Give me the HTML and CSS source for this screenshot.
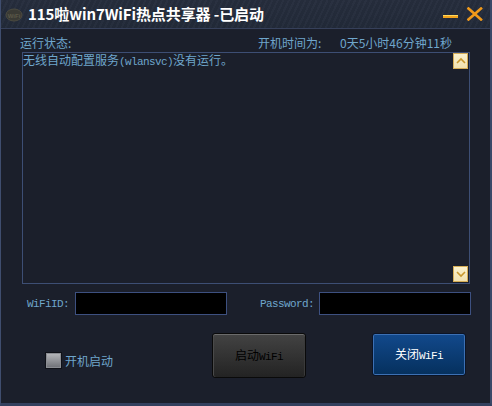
FILE: index.html
```html
<!DOCTYPE html>
<html lang="zh-CN">
<head>
<meta charset="utf-8">
<title>115啦win7WiFi热点共享器</title>
<link rel="stylesheet" href="styles.css">
</head>
<body>
<div class="window">
  <div class="titlebar">
    <svg class="logo" width="18" height="14" viewBox="0 0 18 14">
      <ellipse cx="9" cy="7" rx="8" ry="6" fill="#3a3a34" stroke="#4b4a40" stroke-width="1"/>
      <text x="9" y="9.5" font-size="6" font-family="Liberation Sans, sans-serif" font-weight="bold" text-anchor="middle" fill="#5a5848">WiFi</text>
    </svg>
    <div class="title">115啦win7WiFi热点共享器 -已启动</div>
    <div class="controls">
      <svg class="min" width="16" height="14" viewBox="0 0 16 14"><rect x="0" y="8" width="15" height="3" fill="#f0a21c"/><rect x="0" y="8" width="15" height="1" fill="#ffd75a"/></svg>
      <svg class="close" width="16" height="14" viewBox="0 0 16 14"><path d="M1.5 1.5 L14 12.5 M14 1.5 L1.5 12.5" stroke="#f0991a" stroke-width="2.6" stroke-linecap="square"/></svg>
    </div>
  </div>
  <div class="content">
    <div class="status-row">
      <span class="st-label">运行状态:</span>
      <span class="up-label">开机时间为:</span>
      <span class="up-time">0天5小时46分钟11秒</span>
    </div>
    <div class="log">
      <div class="log-text">无线自动配置服务<span class="m">(wlansvc)</span>没有运行。</div>
      <div class="scroll">
        <div class="sbtn"><svg width="12" height="8" viewBox="0 0 12 8"><path d="M2 6 L6 2 L10 6" fill="none" stroke="#c9982e" stroke-width="1.6"/></svg></div>
        <div class="sbtn"><svg width="12" height="8" viewBox="0 0 12 8"><path d="M2 2 L6 6 L10 2" fill="none" stroke="#c9982e" stroke-width="1.6"/></svg></div>
      </div>
    </div>
    <div class="input-row">
      <label class="lbl lbl-id m">WiFiID:</label>
      <div class="field"></div>
      <label class="lbl lbl-pw m">Password:</label>
      <div class="field"></div>
    </div>
    <div class="bottom-row">
      <div class="check">
        <span class="box"></span>
        <span class="check-text">开机启动</span>
      </div>
      <button class="btn btn-start"><span class="btn-label">启动<span class="m">WiFi</span></span></button>
      <button class="btn btn-stop"><span class="btn-label">关闭<span class="m">WiFi</span></span></button>
    </div>
  </div>
</div>
</body>
</html>
```

FILE: styles.css
```css
* { box-sizing: border-box; }
html, body {
  margin: 0;
  padding: 0;
  background: #1b1f2b;
}
body {
  width: 492px;
  height: 406px;
  overflow: hidden;
  font-family: "Noto Sans CJK SC", "Noto Sans", sans-serif;
  font-size: 12px;
  color: #6fa6cc;
}
.window {
  width: 492px;
  height: 406px;
  display: flex;
  flex-direction: column;
  background: #1b1f2b;
  border-left: 1px solid #3f4d6e;
  border-right: 2px solid #3a4868;
  border-bottom: 3px solid #33405e;
}
.titlebar {
  height: 29px;
  flex: none;
  display: flex;
  align-items: center;
  background:
    repeating-linear-gradient(115deg, rgba(255,255,255,0.018) 0 2px, rgba(0,0,0,0.03) 2px 5px),
    linear-gradient(#262d3d, #222a39);
  border-bottom: 1px solid #36405a;
}
.logo {
  margin-left: 4px;
  margin-top: 1px;
  flex: none;
}
.title {
  margin-left: 5px;
  color: #ffffff;
  font-weight: bold;
  font-size: 15px;
  line-height: 18px;
  white-space: nowrap;
  letter-spacing: -0.1px;
}
.controls {
  margin-left: auto;
  margin-right: 7px;
  display: flex;
  gap: 8px;
  align-items: center;
}
.content {
  flex: 1;
  padding-left: 19px;
  display: flex;
  flex-direction: column;
}
.status-row {
  margin-top: 5px;
  height: 17px;
  display: flex;
  align-items: center;
  line-height: 17px;
  white-space: nowrap;
}
.st-label { width: 238px; }
.up-label { width: 82px; }
.log {
  margin-left: 2px;
  margin-top: 1px;
  width: 448px;
  height: 232px;
  border: 1px solid #3d4e74;
  display: flex;
}
.log-text {
  flex: 1;
  line-height: 14px;
  white-space: nowrap;
}
.scroll {
  width: 16px;
  display: flex;
  flex-direction: column;
  justify-content: space-between;
  padding-bottom: 1px;
}
.sbtn {
  width: 15px;
  height: 16px;
  background: linear-gradient(#fbf1cc, #f2e2b0);
  border: 1px solid #d6ad56;
  display: flex;
  align-items: center;
  justify-content: center;
}
.m {
  font-family: "Liberation Mono", "DejaVu Sans Mono", monospace;
  font-size: 11px;
  letter-spacing: -0.6px;
}
.input-row {
  margin-top: 8px;
  height: 23px;
  display: flex;
  align-items: center;
}
.lbl {
  color: #6fa6cc;
  white-space: nowrap;
}
.lbl-id {
  width: 55px;
  padding-left: 7px;
}
.lbl-pw {
  width: 92px;
  text-align: right;
  padding-right: 5px;
}
.field {
  width: 152px;
  height: 23px;
  background: #000;
  border: 1px solid #3d5080;
}
.bottom-row {
  margin-top: 18px;
  display: flex;
  align-items: flex-start;
}
.check {
  width: 192px;
  margin-top: 19px;
  padding-left: 25px;
  display: flex;
  align-items: center;
  gap: 3px;
}
.box {
  width: 17px;
  height: 17px;
  border: 1px solid #0f1118;
  background: linear-gradient(#b8b9bd, #6d6f75);
  box-shadow: inset 0 0 0 1px #8a8c92;
}
.check-text {
  line-height: 16px;
}
.btn {
  font-family: "Noto Sans CJK SC", sans-serif;
  font-size: 12px;
  border-radius: 3px;
  padding: 0;
  text-align: center;
}
.btn-label {
  display: inline-block;
  line-height: 16px;
  white-space: nowrap;
}
.btn-label .m {
  vertical-align: baseline;
}
.btn-start {
  width: 94px;
  height: 45px;
  color: #000;
  background: linear-gradient(#434343, #232323);
  border: 1px solid #0a0a0a;
  box-shadow: inset 0 1px 0 #6b6b6b, inset 1px 0 0 #4a4a4a, inset -1px 0 0 #3a3a3a;
}
.btn-stop {
  margin-left: 66px;
  width: 94px;
  height: 43px;
  color: #fff;
  background: linear-gradient(#12498c, #05305d);
  border: 1px solid #0b1426;
  box-shadow: inset 0 0 0 1px #3c70b4;
}
```
